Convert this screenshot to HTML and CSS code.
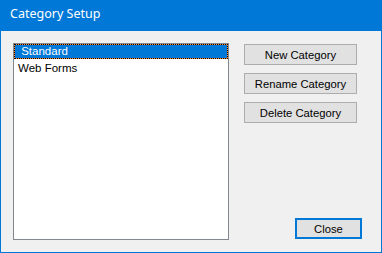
FILE: index.html
```html
<!DOCTYPE html>
<html>
<head>
<meta charset="utf-8">
<link rel="stylesheet" href="styles.css">
</head>
<body>
<div class="window">
  <div class="titlebar">Category Setup</div>
  <div class="content">
    <div class="listbox">
      <div class="item selected">&nbsp;Standard</div>
      <div class="item">Web Forms</div>
    </div>
    <div class="side">
      <div class="actions">
        <button class="btn">New Category</button>
        <button class="btn">Rename Category</button>
        <button class="btn">Delete Category</button>
      </div>
      <button class="btn close">Close</button>
    </div>
  </div>
</div>
</body>
</html>
```
FILE: styles.css
```css
html, body {
  margin: 0;
  padding: 0;
  background: #f0f0f0;
}
.window {
  width: 382px;
  height: 253px;
  box-sizing: border-box;
  border: 1px solid #0078d7;
  border-top: none;
  background: #f0f0f0;
  display: flex;
  flex-direction: column;
  font-family: "Liberation Sans", Arial, sans-serif;
}
.titlebar {
  height: 31px;
  background: #0078d7;
  color: #ffffff;
  font-family: "Noto Sans", "Open Sans", sans-serif;
  font-size: 12.5px;
  line-height: 14px;
  padding: 7px 0 0 9px;
  box-sizing: border-box;
}
.content {
  display: flex;
  padding: 12px 0 0 12px;
}
.listbox {
  width: 216px;
  height: 197px;
  box-sizing: border-box;
  border: 1px solid #828790;
  background: #ffffff;
  font-size: 11.5px;
}
.item {
  height: 16px;
  line-height: 16px;
  padding-left: 4px;
  color: #000;
  box-sizing: border-box;
  position: relative;
}
.item.selected {
  background: #0078d7;
  color: #ffffff;
  height: 15px;
  line-height: 15px;
  margin-bottom: 1px;
}
.item.selected::before {
  content: "";
  position: absolute;
  inset: 0;
  border: 1px solid #ff8c2a;
}
.item.selected::after {
  content: "";
  position: absolute;
  inset: 0;
  border: 1px dotted #000;
}
.side {
  width: 118px;
  margin-left: 15px;
  margin-top: 1px;
  height: 195px;
  display: flex;
  flex-direction: column;
  justify-content: space-between;
  align-items: flex-start;
}
.actions {
  display: flex;
  flex-direction: column;
  gap: 8px;
}
.btn {
  font-family: "Liberation Sans", Arial, sans-serif;
  font-size: 11.25px;
  color: #000;
  background: #e1e1e1;
  border: 1px solid #adadad;
  width: 113px;
  height: 21px;
  padding: 0;
  margin: 0;
  box-sizing: border-box;
}
.btn.close {
  align-self: flex-end;
  width: 67px;
  border: 2px solid #0078d7;
}
```
